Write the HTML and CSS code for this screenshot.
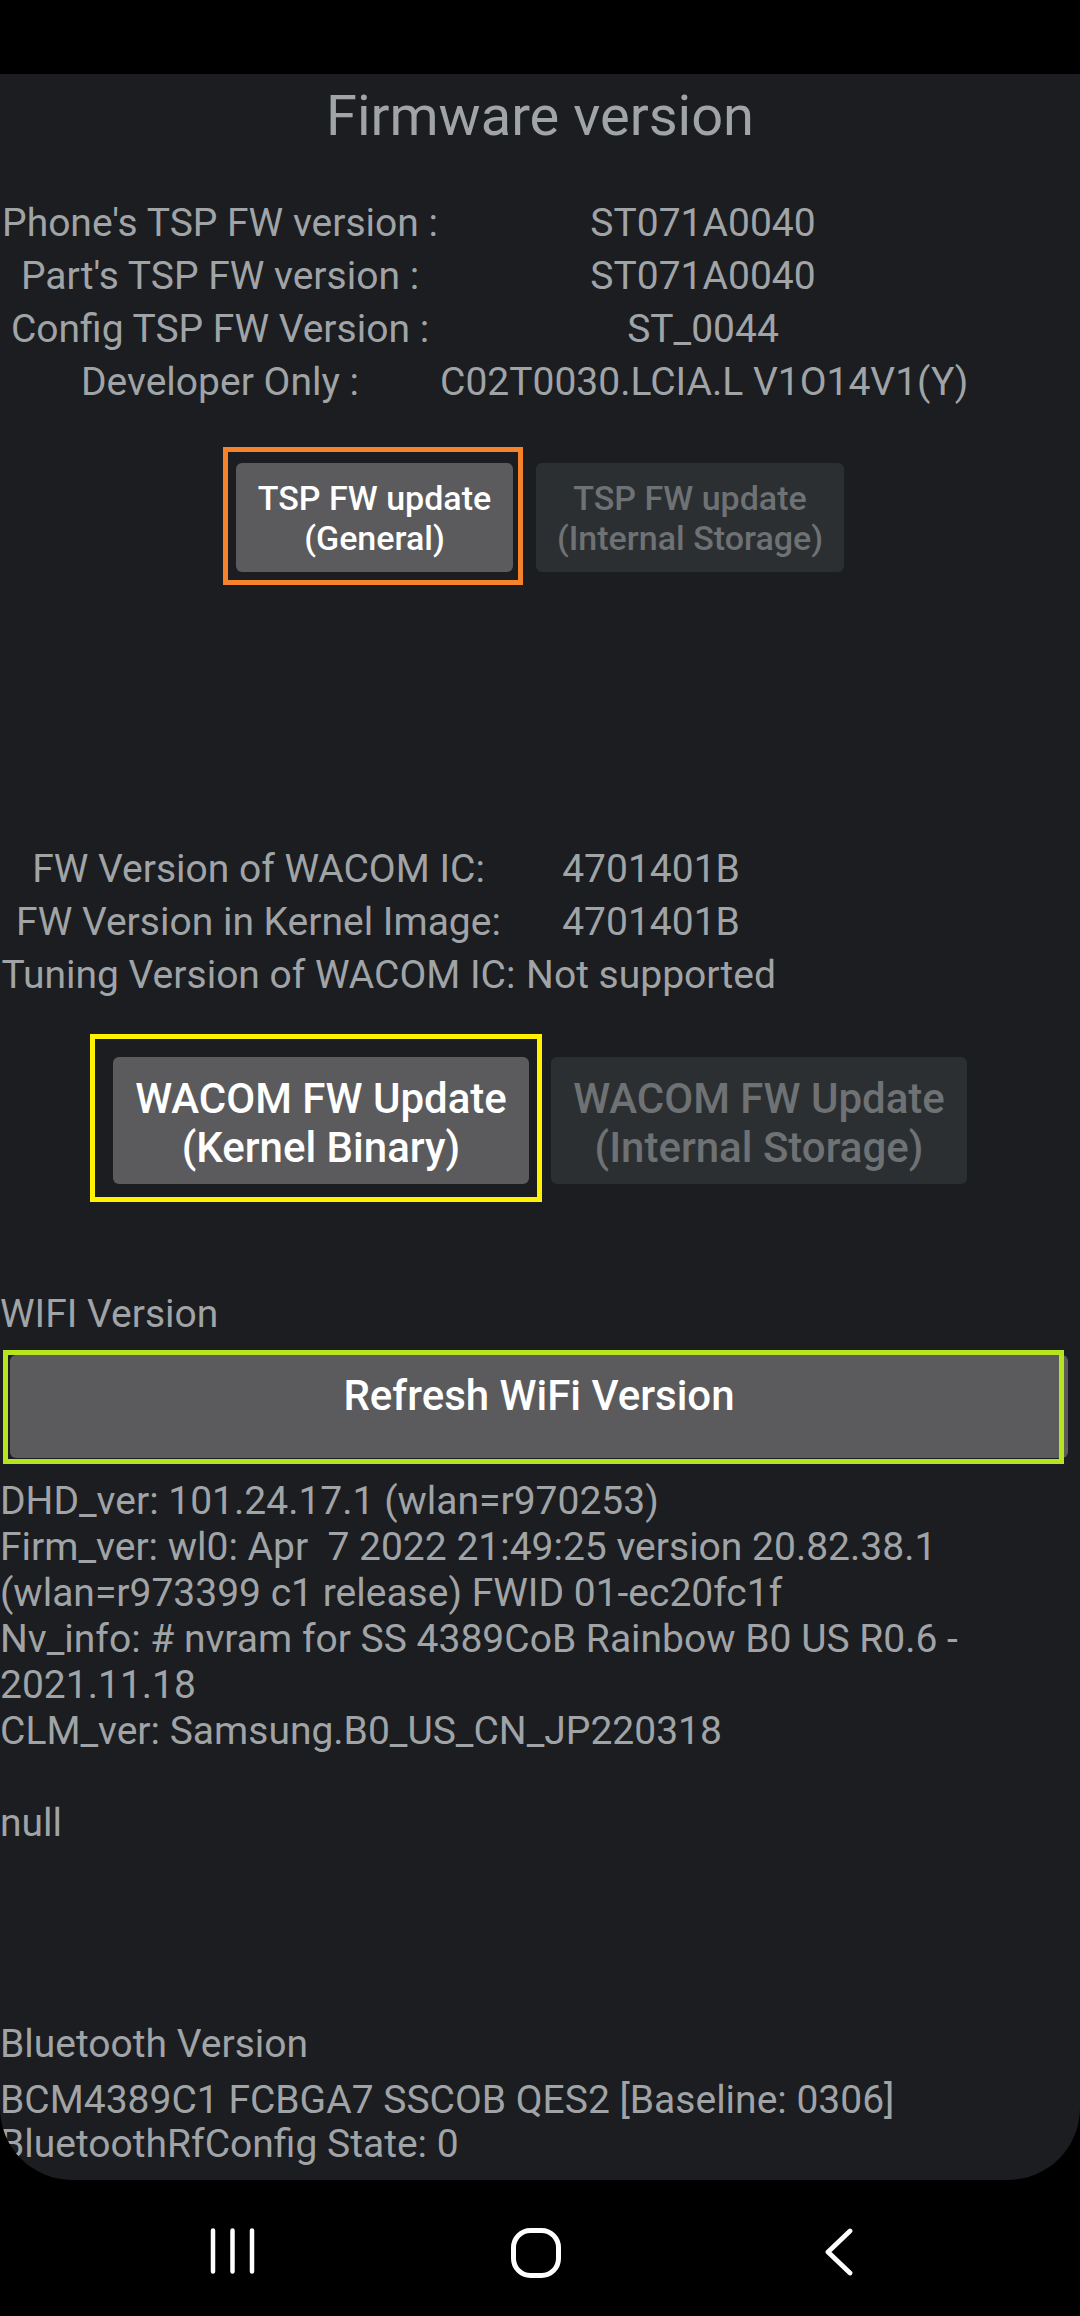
FILE: index.html
```html
<!DOCTYPE html>
<html lang="en">
<head>
  <meta charset="UTF-8" />
  <title>Firmware version</title>
  <link rel="stylesheet" href="styles.css">
</head>
<body>

  <div class="status-bar"></div>

  <main class="panel">
    <h1 class="title">Firmware version</h1>

    <div class="info tsp-info">
      <span>Phone's TSP FW version :</span><span>ST071A0040</span>
      <span>Part's TSP FW version :</span><span>ST071A0040</span>
      <span>Config TSP FW Version :</span><span>ST_0044</span>
      <span>Developer Only :</span><span>C02T0030.LCIA.L V1O14V1(Y)</span>
    </div>

    <div class="btn-row tsp-btns">
      <button class="btn mark mark-orange">TSP FW update<br>(General)</button>
      <button class="btn off">TSP FW update<br>(Internal Storage)</button>
    </div>

    <div class="info wacom-info">
      <span>FW Version of WACOM IC:</span><span>4701401B</span>
      <span>FW Version in Kernel Image:</span><span>4701401B</span>
      <span>Tuning Version of WACOM IC:</span><span>Not supported</span>
    </div>

    <div class="btn-row wacom-btns">
      <button class="btn mark mark-yellow">WACOM FW Update<br>(Kernel Binary)</button>
      <button class="btn off">WACOM FW Update<br>(Internal Storage)</button>
    </div>

    <div class="section-label wifi-label">WIFI Version</div>
    <button class="btn wide mark mark-green">Refresh WiFi Version</button>

    <div class="dump wifi-dump">
      <div>DHD_ver: 101.24.17.1 (wlan=r970253)</div>
      <div>Firm_ver: wl0: Apr&nbsp; 7 2022 21:49:25 version 20.82.38.1</div>
      <div>(wlan=r973399 c1 release) FWID 01-ec20fc1f</div>
      <div>Nv_info: # nvram for SS 4389CoB Rainbow B0 US R0.6 -</div>
      <div>2021.11.18</div>
      <div>CLM_ver: Samsung.B0_US_CN_JP220318</div>
      <div>&nbsp;</div>
      <div>null</div>
    </div>

    <div class="section-label bt-label">Bluetooth Version</div>
    <div class="dump bt-dump">
      <div>BCM4389C1 FCBGA7 SSCOB QES2 [Baseline: 0306]</div>
      <div>BluetoothRfConfig State: 0</div>
    </div>
  </main>

  <nav class="nav-bar">
    <div class="nav-item">
      <svg width="46" height="46" viewBox="0 0 46 46">
        <path d="M3 2.5v41M22.5 2.5v41M42 2.5v41" stroke="#fff" stroke-width="4.5" stroke-linecap="round" fill="none"/>
      </svg>
    </div>
    <div class="nav-item">
      <svg width="50" height="50" viewBox="0 0 50 50">
        <rect x="2.5" y="2.5" width="45" height="45" rx="17" stroke="#fff" stroke-width="5" fill="none"/>
      </svg>
    </div>
    <div class="nav-item">
      <svg width="30" height="48" viewBox="0 0 30 48">
        <path d="M26 3 L4 24 L26 45" stroke="#fff" stroke-width="4.8" stroke-linecap="round" stroke-linejoin="round" fill="none"/>
      </svg>
    </div>
  </nav>

</body>
</html>
```

FILE: styles.css
```css
body {
  margin: 0;
  width: 1080px;
  height: 2316px;
  background: #000;
  font-family: Roboto, 'Noto Sans', sans-serif;
  color: #a0a4a7;
  overflow: hidden;
}

.status-bar {
  height: 74px;
  background: #000;
}

.panel {
  height: 2106px;
  background: #1b1d20;
  border-radius: 0 0 72px 72px;
  overflow: hidden;
  padding-top: 10px;
  box-sizing: border-box;
}

.title {
  margin: 0;
  font-size: 56px;
  line-height: 64px;
  font-weight: 400;
  text-align: center;
}

/* two column key / value tables */
.info {
  display: grid;
  font-size: 39px;
  line-height: 53px;
  text-align: center;
  white-space: nowrap;
}

.tsp-info {
  grid-template-columns: 440px 526px;
  margin-top: 49px;
}

.wacom-info {
  grid-template-columns: 517px 268px;
  margin-top: 271px;
}

.btn-row {
  display: flex;
  justify-content: center;
}

.tsp-btns {
  gap: 23px;
  margin-top: 54px;
}

.wacom-btns {
  gap: 22px;
  margin-top: 55px;
}

.btn {
  position: relative;
  margin: 0;
  border: none;
  border-radius: 6px;
  background: #5b5b5d;
  color: #fff;
  font-family: Roboto, 'Noto Sans', sans-serif;
  font-weight: 500;
  box-sizing: border-box;
  white-space: nowrap;
  padding: 0;
}

.btn.off {
  background: #2c2f31;
  color: #6f7274;
}

.tsp-btns .btn {
  height: 109px;
  font-size: 34px;
  line-height: 40px;
  padding-top: 15px;
  padding-bottom: 14px;
}

.tsp-btns .btn:first-child { width: 277px; }
.tsp-btns .btn:last-child { width: 308px; }

.wacom-btns .btn {
  height: 127px;
  width: 416px;
  font-size: 42px;
  line-height: 49px;
  padding-top: 17px;
  padding-bottom: 12px;
}

.btn.wide {
  display: block;
  width: 1058px;
  height: 103px;
  margin: 18px 0 0 10px;
  font-size: 42px;
  line-height: 48px;
  padding-top: 17px;
  padding-bottom: 38px;
}

/* highlight frames drawn over the buttons */
.mark::after {
  content: "";
  position: absolute;
  border: 5px solid;
  pointer-events: none;
}

.mark-orange::after {
  border-color: #f6822b;
  inset: -16px -10px -13px -13px;
}

.mark-yellow::after {
  border-color: #fff200;
  inset: -23px -13px -18px -23px;
}

.mark-green::after {
  border-color: #b6e41f;
  inset: -5px 4px -6px -7px;
}

.section-label {
  font-size: 39px;
  line-height: 46px;
}

.wifi-label {
  margin-top: 107px;
}

.dump {
  font-size: 39px;
  line-height: 46px;
  white-space: nowrap;
}

.wifi-dump {
  margin-top: 20px;
}

.bt-label {
  margin-top: 175px;
}

.bt-dump {
  margin-top: 11px;
  line-height: 44px;
}

.nav-bar {
  height: 136px;
  display: flex;
  padding-left: 81px;
}

.nav-item {
  width: 303px;
  display: flex;
  justify-content: center;
  padding-top: 48px;
}

.nav-item svg {
  display: block;
}
```
